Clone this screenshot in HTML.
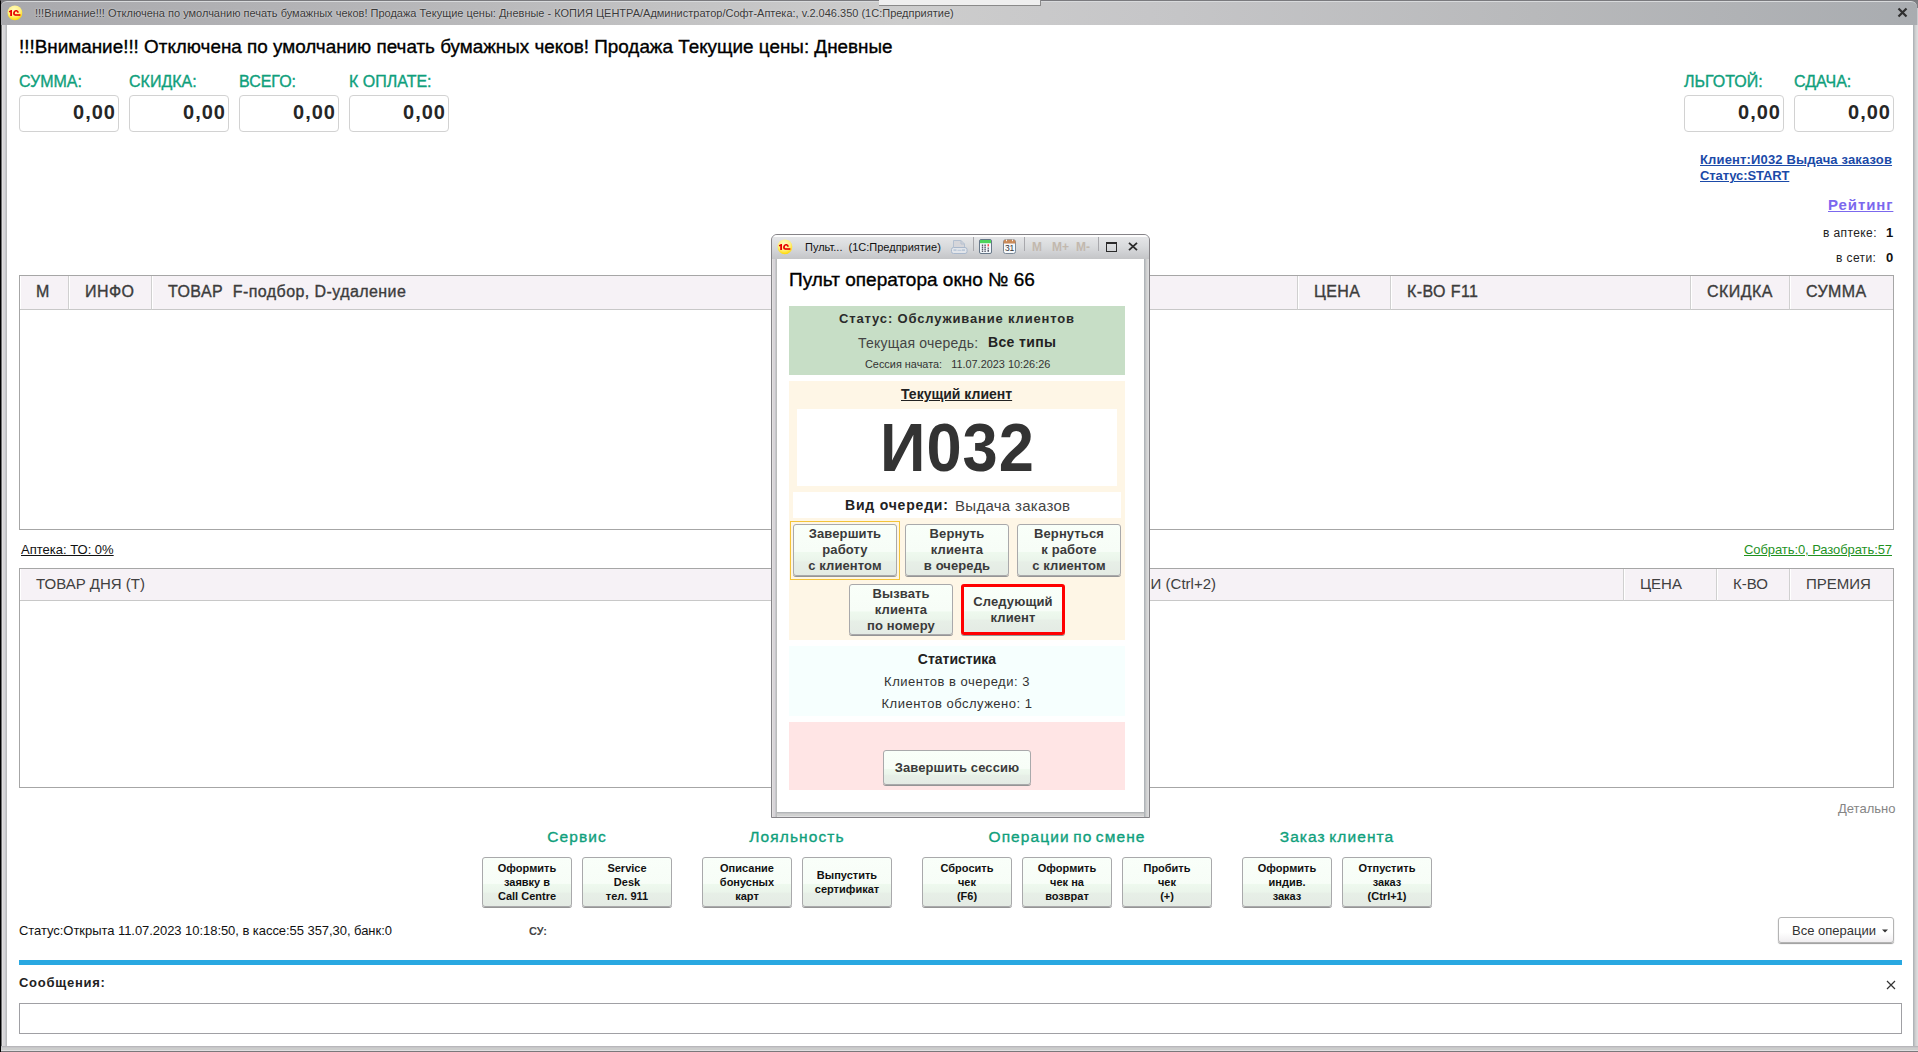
<!DOCTYPE html>
<html><head><meta charset="utf-8">
<style>
*{margin:0;padding:0;box-sizing:border-box}
html,body{width:1918px;height:1052px;overflow:hidden;background:#fff;font-family:"Liberation Sans",sans-serif;color:#222;-webkit-text-stroke-width:0}
.k{-webkit-text-stroke-width:0.35px}
.t{-webkit-text-stroke-width:0}
.a{position:absolute;white-space:nowrap}
#frame{position:absolute;left:0;top:0;width:1918px;height:1052px;background:linear-gradient(180deg,#7e7e82 0,#7e7e82 7px,#c9cacd 7px);border-left:1px solid #000;border-top:1px solid #7a7a7e;border-bottom:1px solid #5a5a5e}
#tbar{position:absolute;left:1px;top:1px;width:1916px;height:24px;background:linear-gradient(90deg,#a9a9ad 0%,#b9b9bb 25%,#cdcdcd 47%,#c6c6c8 60%,#b8b9bb 80%,#a9acb0 100%);border-top:1px solid #d8dadc;border-radius:6px 6px 0 0}
#content{position:absolute;left:7px;top:25px;width:1906px;height:1021px;background:#fff}
.teal{color:#0fa07c;font-size:16px;margin-top:1px;-webkit-text-stroke-width:0.35px}
.box{position:absolute;width:100px;height:37px;border:1px solid #d2d2d2;border-radius:4px;background:#fff}
.num{position:absolute;right:2px;top:5px;font-size:20px;font-weight:bold;color:#262626;letter-spacing:1px}
.tbl{position:absolute;border:1px solid #a6a6a6;background:#fff}
.th{position:absolute;top:0;background:#f6f2f6;box-shadow:inset 1px 0 #fff;border-right:1px solid #d0d0d0;border-bottom:1px solid #c8c8c8}
.tht{position:absolute;font-size:16px;color:#3c3c3c;letter-spacing:0.42px;-webkit-text-stroke-width:0.35px}
.tht2{position:absolute;font-size:15px;color:#404040}
.grp{position:absolute;color:#0fa07c;font-size:15.5px;text-align:center;letter-spacing:1.1px;word-spacing:-2px;-webkit-text-stroke-width:0.35px}
.btn{position:absolute;width:90px;height:50px;border:1px solid #a9a9ab;border-radius:3px;background:linear-gradient(180deg,#f9fff9 0%,#f7fdf7 53%,#eef9ee 55%,#ebf5eb 70%,#e7efe7 74%,#e4ebe4 100%);box-shadow:0 1px 0 #959595;font-size:11px;font-weight:bold;color:#111;text-align:center;line-height:14px;display:flex;align-items:center;justify-content:center}
.pbtn{position:absolute;width:104px;height:52px;border:1px solid #a9a9ab;border-radius:3px;background:linear-gradient(180deg,#f9fff9 0%,#f7fdf7 53%,#eef9ee 55%,#ebf5eb 70%,#e7efe7 74%,#e4ebe4 100%);box-shadow:0 1px 0 #959595;font-size:13px;font-weight:bold;color:#3a3a3a;text-align:center;line-height:16px;display:flex;align-items:center;justify-content:center;letter-spacing:0.1px}
</style></head><body>
<div id="frame"></div>
<div class="a" style="left:0;top:25px;width:7px;height:1027px;background:linear-gradient(90deg,#000 0,#000 1px,#707072 1px,#707072 2px,#e0e0e0 2px,#e0e0e0 3px,#d7d5d8 3px,#d7d5d8 5px,#c7c9cd 5px,#c7c9cd 6px,#bcbdbe 6px)"></div>
<div class="a" style="left:1913px;top:25px;width:5px;height:1021px;background:linear-gradient(90deg,#b0b4b8 0,#b0b4b8 1px,#bfc2c4 1px,#bfc2c4 2px,#cfcfcf 2px,#cfcfcf 3px,#d5d6d8 3px,#d5d6d8 4px,#dcdcdc 4px)"></div>
<div class="a" style="left:1px;top:1046px;width:1917px;height:6px;background:linear-gradient(180deg,#b8b7ba 0,#b8b7ba 1px,#c6c5c8 1px,#c6c5c8 2px,#cccdcc 2px,#cccdcc 4px,#e0dfe1 4px,#e0dfe1 5px,#7a787b 5px)"></div>
<div id="tbar"></div>
<div class="a" style="left:879px;top:0;width:162px;height:6px;background:#efefef;border-right:1px solid #8a8a8a;border-bottom:1px solid #8a8a8a"></div>
<svg width="0" height="0" style="position:absolute"><symbol id="ic1c" viewBox="0 0 16 16"><defs><radialGradient id="g1" cx="45%" cy="30%" r="70%"><stop offset="0" stop-color="#fffbc0"/><stop offset="0.6" stop-color="#fff080"/><stop offset="1" stop-color="#ffd800"/></radialGradient></defs><circle cx="7.9" cy="7.8" r="7.4" fill="url(#g1)"/><path d="M1.8 6.3 L4 4.9 L5 4.9 L5 10.9 L3.2 10.9 L3.2 7.1 L2.3 7.4 Z" fill="#e60000"/><path d="M11 7.8 C11.2 5.6 8.2 5 7.3 6.8 C6.7 8 7 9.4 7.9 10" stroke="#e60000" stroke-width="1.6" fill="none"/><rect x="7.8" y="9.2" width="5.6" height="1.6" fill="#e60000"/></symbol></svg>
<svg class="a" style="left:7px;top:5px" width="16" height="16" viewBox="0 0 16 16"><use href="#ic1c"/></svg>
<div class="a" style="left:35px;top:7px;font-size:11px;color:#3a3a3a;text-shadow:0 0 2px #e8e8e8">!!!Внимание!!! Отключена по умолчанию печать бумажных чеков! Продажа Текущие цены: Дневные - КОПИЯ ЦЕНТРА/Администратор/Софт-Аптека:, v.2.046.350  (1С:Предприятие)</div>
<svg class="a" style="left:1897px;top:7px" width="11" height="11" viewBox="0 0 11 11"><path d="M1.5 1.5 L9.5 9.5 M9.5 1.5 L1.5 9.5" stroke="#2f2f2f" stroke-width="2.2"/></svg>
<div id="content"></div>

<div class="a k" style="left:19px;top:36px;font-size:18.88px;color:#000">!!!Внимание!!! Отключена по умолчанию печать бумажных чеков! Продажа Текущие цены: Дневные</div>

<div class="a teal" style="left:19px;top:72px">СУММА:</div>
<div class="a teal" style="left:129px;top:72px">СКИДКА:</div>
<div class="a teal" style="left:239px;top:72px">ВСЕГО:</div>
<div class="a teal" style="left:349px;top:72px">К ОПЛАТЕ:</div>
<div class="a teal" style="left:1684px;top:72px">ЛЬГОТОЙ:</div>
<div class="a teal" style="left:1794px;top:72px">СДАЧА:</div>
<div class="box" style="left:19px;top:95px"><span class="num">0,00</span></div>
<div class="box" style="left:129px;top:95px"><span class="num">0,00</span></div>
<div class="box" style="left:239px;top:95px"><span class="num">0,00</span></div>
<div class="box" style="left:349px;top:95px"><span class="num">0,00</span></div>
<div class="box" style="left:1684px;top:95px"><span class="num">0,00</span></div>
<div class="box" style="left:1794px;top:95px"><span class="num">0,00</span></div>

<div class="a" style="left:1700px;top:152px;font-size:13px;font-weight:bold;color:#1b4aa8;line-height:16px;text-decoration:underline;letter-spacing:0.15px">Клиент:И032 Выдача заказов<br><span style="letter-spacing:-0.1px">Статус:START</span></div>
<div class="a" style="left:1828px;top:196px;font-size:15px;font-weight:bold;color:#7b68ee;text-decoration:underline;letter-spacing:0.9px">Рейтинг</div>
<div class="a t" style="left:1823px;top:226px;font-size:12px;color:#222;letter-spacing:0.4px">в аптеке:</div>
<div class="a" style="left:1886px;top:225px;font-size:13px;font-weight:bold;color:#111">1</div>
<div class="a t" style="left:1836px;top:251px;font-size:12px;color:#222;letter-spacing:0.4px">в сети:</div>
<div class="a" style="left:1886px;top:250px;font-size:13px;font-weight:bold;color:#111">0</div>

<!-- table 1 -->
<div class="tbl" style="left:19px;top:275px;width:1875px;height:255px">
 <div class="th" style="left:0;width:49px;height:34px"></div>
 <div class="th" style="left:49px;width:83px;height:34px"></div>
 <div class="th" style="left:132px;width:1146px;height:34px"></div>
 <div class="th" style="left:1278px;width:93px;height:34px"></div>
 <div class="th" style="left:1371px;width:300px;height:34px"></div>
 <div class="th" style="left:1671px;width:99px;height:34px"></div>
 <div class="th" style="left:1770px;width:103px;height:34px;border-right:none"></div>
</div>
<div class="tht a" style="left:36px;top:283px">М</div>
<div class="tht a" style="left:85px;top:283px">ИНФО</div>
<div class="tht a" style="left:168px;top:283px">ТОВАР&nbsp; F-подбор, D-удаление</div>
<div class="tht a" style="left:1314px;top:283px">ЦЕНА</div>
<div class="tht a" style="left:1407px;top:283px">К-ВО F11</div>
<div class="tht a" style="left:1707px;top:283px">СКИДКА</div>
<div class="tht a" style="left:1806px;top:283px">СУММА</div>

<div class="a t" style="left:21px;top:542px;font-size:13px;color:#111;text-decoration:underline">Аптека: ТО: 0%</div>
<div class="a t" style="left:1744px;top:542px;font-size:13px;color:#1f921f;text-decoration:underline;letter-spacing:-0.08px">Собрать:0, Разобрать:57</div>

<!-- table 2 -->
<div class="tbl" style="left:19px;top:568px;width:1875px;height:220px">
 <div class="th" style="left:0;width:1604px;height:32px"></div>
 <div class="th" style="left:1604px;width:93px;height:32px"></div>
 <div class="th" style="left:1697px;width:73px;height:32px"></div>
 <div class="th" style="left:1770px;width:103px;height:32px;border-right:none"></div>
</div>
<div class="tht2 a" style="left:36px;top:575px">ТОВАР ДНЯ (Т)</div>
<div class="tht2 a" style="right:702px;top:575px">АКЦИИ (Ctrl+2)</div>
<div class="tht2 a" style="left:1640px;top:575px">ЦЕНА</div>
<div class="tht2 a" style="left:1733px;top:575px">К-ВО</div>
<div class="tht2 a" style="left:1806px;top:575px">ПРЕМИЯ</div>

<div class="a t" style="left:1838px;top:801px;font-size:13px;color:#858585">Детально</div>

<div class="grp" style="left:482px;top:828px;width:190px">Сервис</div>
<div class="grp" style="left:702px;top:828px;width:190px">Лояльность</div>
<div class="grp" style="left:922px;top:828px;width:290px">Операции по смене</div>
<div class="grp" style="left:1242px;top:828px;width:190px">Заказ клиента</div>

<div class="btn" style="left:482px;top:857px">Оформить<br>заявку в<br>Call Centre</div>
<div class="btn" style="left:582px;top:857px">Service<br>Desk<br>тел. 911</div>
<div class="btn" style="left:702px;top:857px">Описание<br>бонусных<br>карт</div>
<div class="btn" style="left:802px;top:857px">Выпустить<br>сертификат</div>
<div class="btn" style="left:922px;top:857px">Сбросить<br>чек<br>(F6)</div>
<div class="btn" style="left:1022px;top:857px">Оформить<br>чек на<br>возврат</div>
<div class="btn" style="left:1122px;top:857px">Пробить<br>чек<br>(+)</div>
<div class="btn" style="left:1242px;top:857px">Оформить<br>индив.<br>заказ</div>
<div class="btn" style="left:1342px;top:857px">Отпустить<br>заказ<br>(Ctrl+1)</div>

<div class="a t" style="left:19px;top:923px;font-size:13px;color:#111;letter-spacing:-0.05px">Статус:Открыта 11.07.2023 10:18:50, в кассе:55 357,30, банк:0</div>
<div class="a" style="left:529px;top:925px;font-size:11px;font-weight:bold;color:#444">СУ:</div>

<div class="a" style="left:1778px;top:917px;width:116px;height:26px;border:1px solid #b4b4b4;border-radius:3px;background:linear-gradient(180deg,#fff 0%,#fff 60%,#f0eef0 100%);box-shadow:0 1px 1px #999"></div>
<div class="a t" style="left:1792px;top:923px;font-size:13px;color:#333">Все операции</div>
<svg class="a" style="left:1882px;top:929px" width="6" height="4" viewBox="0 0 6 4"><path d="M0 0.5 H6 L3 3.5 Z" fill="#333"/></svg>

<div class="a" style="left:19px;top:960px;width:1883px;height:5px;background:#29a8e1"></div>
<div class="a" style="left:19px;top:975px;font-size:13px;font-weight:bold;color:#222;letter-spacing:0.73px">Сообщения:</div>
<svg class="a" style="left:1886px;top:980px" width="10" height="10" viewBox="0 0 10 10"><path d="M1 1 L9 9 M9 1 L1 9" stroke="#333" stroke-width="1.2"/></svg>
<div class="a" style="left:19px;top:1003px;width:1883px;height:31px;border:1px solid #a0a0a4;background:#fff"></div>

<!-- POPUP -->
<div id="popup" class="a" style="left:771px;top:234px;width:379px;height:584px;background:#cbccd0;border:1px solid #858387;border-radius:6px 6px 0 0"></div>
<div class="a" style="left:772px;top:259px;width:5px;height:558px;background:linear-gradient(90deg,#e0e0e0 0,#e0e0e0 1px,#d8d4d8 1px,#d8d4d8 3px,#c6c7cb 3px,#c6c7cb 4px,#bbbcbc 4px)"></div>
<div class="a" style="left:1144px;top:259px;width:5px;height:558px;background:linear-gradient(90deg,#b0b4b8 0,#b0b4b8 1px,#bfc2c4 1px,#bfc2c4 2px,#cfcfcf 2px,#cfcfcf 3px,#d5d6d8 3px,#d5d6d8 4px,#dcdcdc 4px)"></div>
<div class="a" style="left:777px;top:812px;width:367px;height:5px;background:linear-gradient(180deg,#b2b6b8 0,#b2b6b8 1px,#c6c5c7 1px,#c6c5c7 2px,#d0d1d0 2px,#d0d1d0 4px,#e0dfe1 4px)"></div>
<div class="a" style="left:772px;top:235px;width:377px;height:24px;background:linear-gradient(180deg,#fdfdfd 0px,#fdfdfd 1.5px,#e4e5e7 2.5px,#d8dadc 12px,#cbcccf 20px,#c4c5c7 24px);border-radius:5px 5px 0 0"></div>
<div class="a" style="left:777px;top:259px;width:367px;height:553px;background:#fff"></div>

<svg class="a" style="left:777px;top:239px" width="16" height="16" viewBox="0 0 16 16"><use href="#ic1c"/></svg>
<div class="a" style="left:805px;top:241px;font-size:11px;color:#111">Пульт...&nbsp; (1С:Предприятие)</div>
<!-- toolbar icons -->
<svg class="a" style="left:951px;top:240px" width="17" height="15" viewBox="0 0 17 15"><path d="M2.5 0.5 H10 L13.5 4 V7.5 H2.5 Z" fill="#d6d6da" stroke="#b4c0d0"/><path d="M10 0.5 V4 H13.5" fill="none" stroke="#b4c0d0"/><rect x="0.5" y="7.5" width="15.5" height="6" rx="2" fill="#e2e5ea" stroke="#a9b8cc"/><rect x="2.5" y="9.3" width="3" height="1.6" fill="#b8c6d8"/><rect x="11" y="9.3" width="3" height="1.6" fill="#b8c6d8"/><rect x="6.5" y="9.8" width="4" height="1" fill="#b8c6d8"/></svg>
<div class="a" style="left:973px;top:237px;width:1px;height:14px;background:#a8a8ac"></div>
<svg class="a" style="left:979px;top:239px" width="13" height="15" viewBox="0 0 13 15"><rect x="0.5" y="0.5" width="12" height="14" rx="1.5" fill="#f4f8fc" stroke="#667788"/><rect x="1" y="1" width="11" height="3.2" fill="#4cd35a"/><g fill="#334"><rect x="2.8" y="5.6" width="1.4" height="1.2"/><rect x="5.4" y="5.6" width="1.4" height="1.2"/><rect x="2.8" y="7.6" width="1.4" height="1.2"/><rect x="5.4" y="7.6" width="1.4" height="1.2"/><rect x="2.8" y="9.6" width="1.4" height="1.2"/><rect x="5.4" y="9.6" width="1.4" height="1.2"/><rect x="2.8" y="11.6" width="1.4" height="1.2"/><rect x="5.4" y="11.6" width="1.4" height="1.2"/><rect x="8.6" y="8.6" width="1.2" height="1.2"/><rect x="8.6" y="10.6" width="1.2" height="2.2"/></g><rect x="8.6" y="5.2" width="1.2" height="2.2" fill="#f22"/></svg>
<svg class="a" style="left:1003px;top:239px" width="13" height="15" viewBox="0 0 13 15"><rect x="0.5" y="0.8" width="12" height="13.7" rx="2" fill="#f6f9fc" stroke="#7a8896"/><path d="M0.5 4.4 V2.8 Q0.5 0.8 2.5 0.8 H10.5 Q12.5 0.8 12.5 2.8 V4.4 Z" fill="#c98a58"/><rect x="3" y="0.6" width="0.9" height="1.6" fill="#fff"/><rect x="9.1" y="0.6" width="0.9" height="1.6" fill="#fff"/><text x="6.5" y="12.4" font-size="8.5" font-family="Liberation Sans" text-anchor="middle" fill="#333" letter-spacing="-0.3">31</text></svg>
<div class="a" style="left:1024px;top:237px;width:1px;height:14px;background:#a8a8ac"></div>
<div class="a" style="left:1032px;top:240px;font-size:12px;font-weight:bold;color:#c2b8ae">M</div>
<div class="a" style="left:1052px;top:240px;font-size:12px;font-weight:bold;color:#c2b8ae">M+</div>
<div class="a" style="left:1076px;top:240px;font-size:12px;font-weight:bold;color:#c2b8ae">M-</div>
<div class="a" style="left:1098px;top:237px;width:1px;height:14px;background:#a8a8ac"></div>
<div class="a" style="left:1106px;top:242px;width:11px;height:10px;border:1px solid #2a2a2a;border-top-width:2px"></div>
<svg class="a" style="left:1128px;top:242px" width="10" height="9" viewBox="0 0 10 9"><path d="M1 0.8 L9 8.2 M9 0.8 L1 8.2" stroke="#2a2a2a" stroke-width="1.8"/></svg>

<div class="a k" style="left:789px;top:269px;font-size:19px;color:#000">Пульт оператора окно № 66</div>

<div class="a" style="left:789px;top:306px;width:336px;height:69px;background:#c7dec6"></div>
<div class="a" style="left:789px;top:311px;width:336px;text-align:center;font-size:13px;font-weight:bold;color:#2a2a2a;letter-spacing:0.84px">Статус: Обслуживание клиентов</div>
<div class="a t" style="left:858px;top:335px;font-size:14px;color:#444;letter-spacing:0.22px">Текущая очередь:</div>
<div class="a" style="left:988px;top:334px;font-size:14px;font-weight:bold;color:#222;letter-spacing:0.36px">Все типы</div>
<div class="a t" style="left:865px;top:358px;font-size:10.9px;color:#333">Сессия начата:&nbsp;&nbsp; 11.07.2023 10:26:26</div>

<div class="a" style="left:789px;top:381px;width:336px;height:259px;background:#fef6e6"></div>
<div class="a" style="left:901px;top:386px;font-size:14px;font-weight:bold;color:#222;text-decoration:underline">Текущий клиент</div>
<div class="a" style="left:797px;top:409px;width:320px;height:77px;background:#fff"></div>
<div class="a" style="left:797px;top:409px;width:320px;height:77px;text-align:center;font-size:68px;font-weight:bold;color:#333;line-height:77px;letter-spacing:1px;transform:scaleX(0.93);text-indent:1px">И032</div>
<div class="a" style="left:793px;top:492px;width:328px;height:26px;background:#fff"></div>
<div class="a" style="left:845px;top:497px;font-size:14px;font-weight:bold;color:#222;letter-spacing:0.8px">Вид очереди:</div>
<div class="a t" style="left:955px;top:497px;font-size:15px;color:#444;letter-spacing:0.3px">Выдача заказов</div>

<div class="a" style="left:790px;top:521px;width:110px;height:59px;border:1px solid #f3c43a"></div>
<div class="pbtn" style="left:793px;top:524px">Завершить<br>работу<br>с клиентом</div>
<div class="pbtn" style="left:905px;top:524px">Вернуть<br>клиента<br>в очередь</div>
<div class="pbtn" style="left:1017px;top:524px">Вернуться<br>к работе<br>с клиентом</div>
<div class="pbtn" style="left:849px;top:584px;height:51px">Вызвать<br>клиента<br>по номеру</div>
<div class="pbtn" style="left:961px;top:584px;height:51px;border:3px solid #ff0000">Следующий<br>клиент</div>

<div class="a" style="left:789px;top:646px;width:336px;height:70px;background:#f6fffe"></div>
<div class="a" style="left:789px;top:651px;width:336px;text-align:center;font-size:14px;font-weight:bold;color:#222">Статистика</div>
<div class="a" style="left:789px;top:674px;width:336px;text-align:center;font-size:13px;color:#333;letter-spacing:0.5px">Клиентов в очереди: 3</div>
<div class="a" style="left:789px;top:696px;width:336px;text-align:center;font-size:13px;color:#333;letter-spacing:0.5px">Клиентов обслужено: 1</div>

<div class="a" style="left:789px;top:722px;width:336px;height:68px;background:#ffe5e5"></div>
<div class="pbtn" style="left:883px;top:750px;width:148px;height:35px">Завершить сессию</div>
</body></html>
